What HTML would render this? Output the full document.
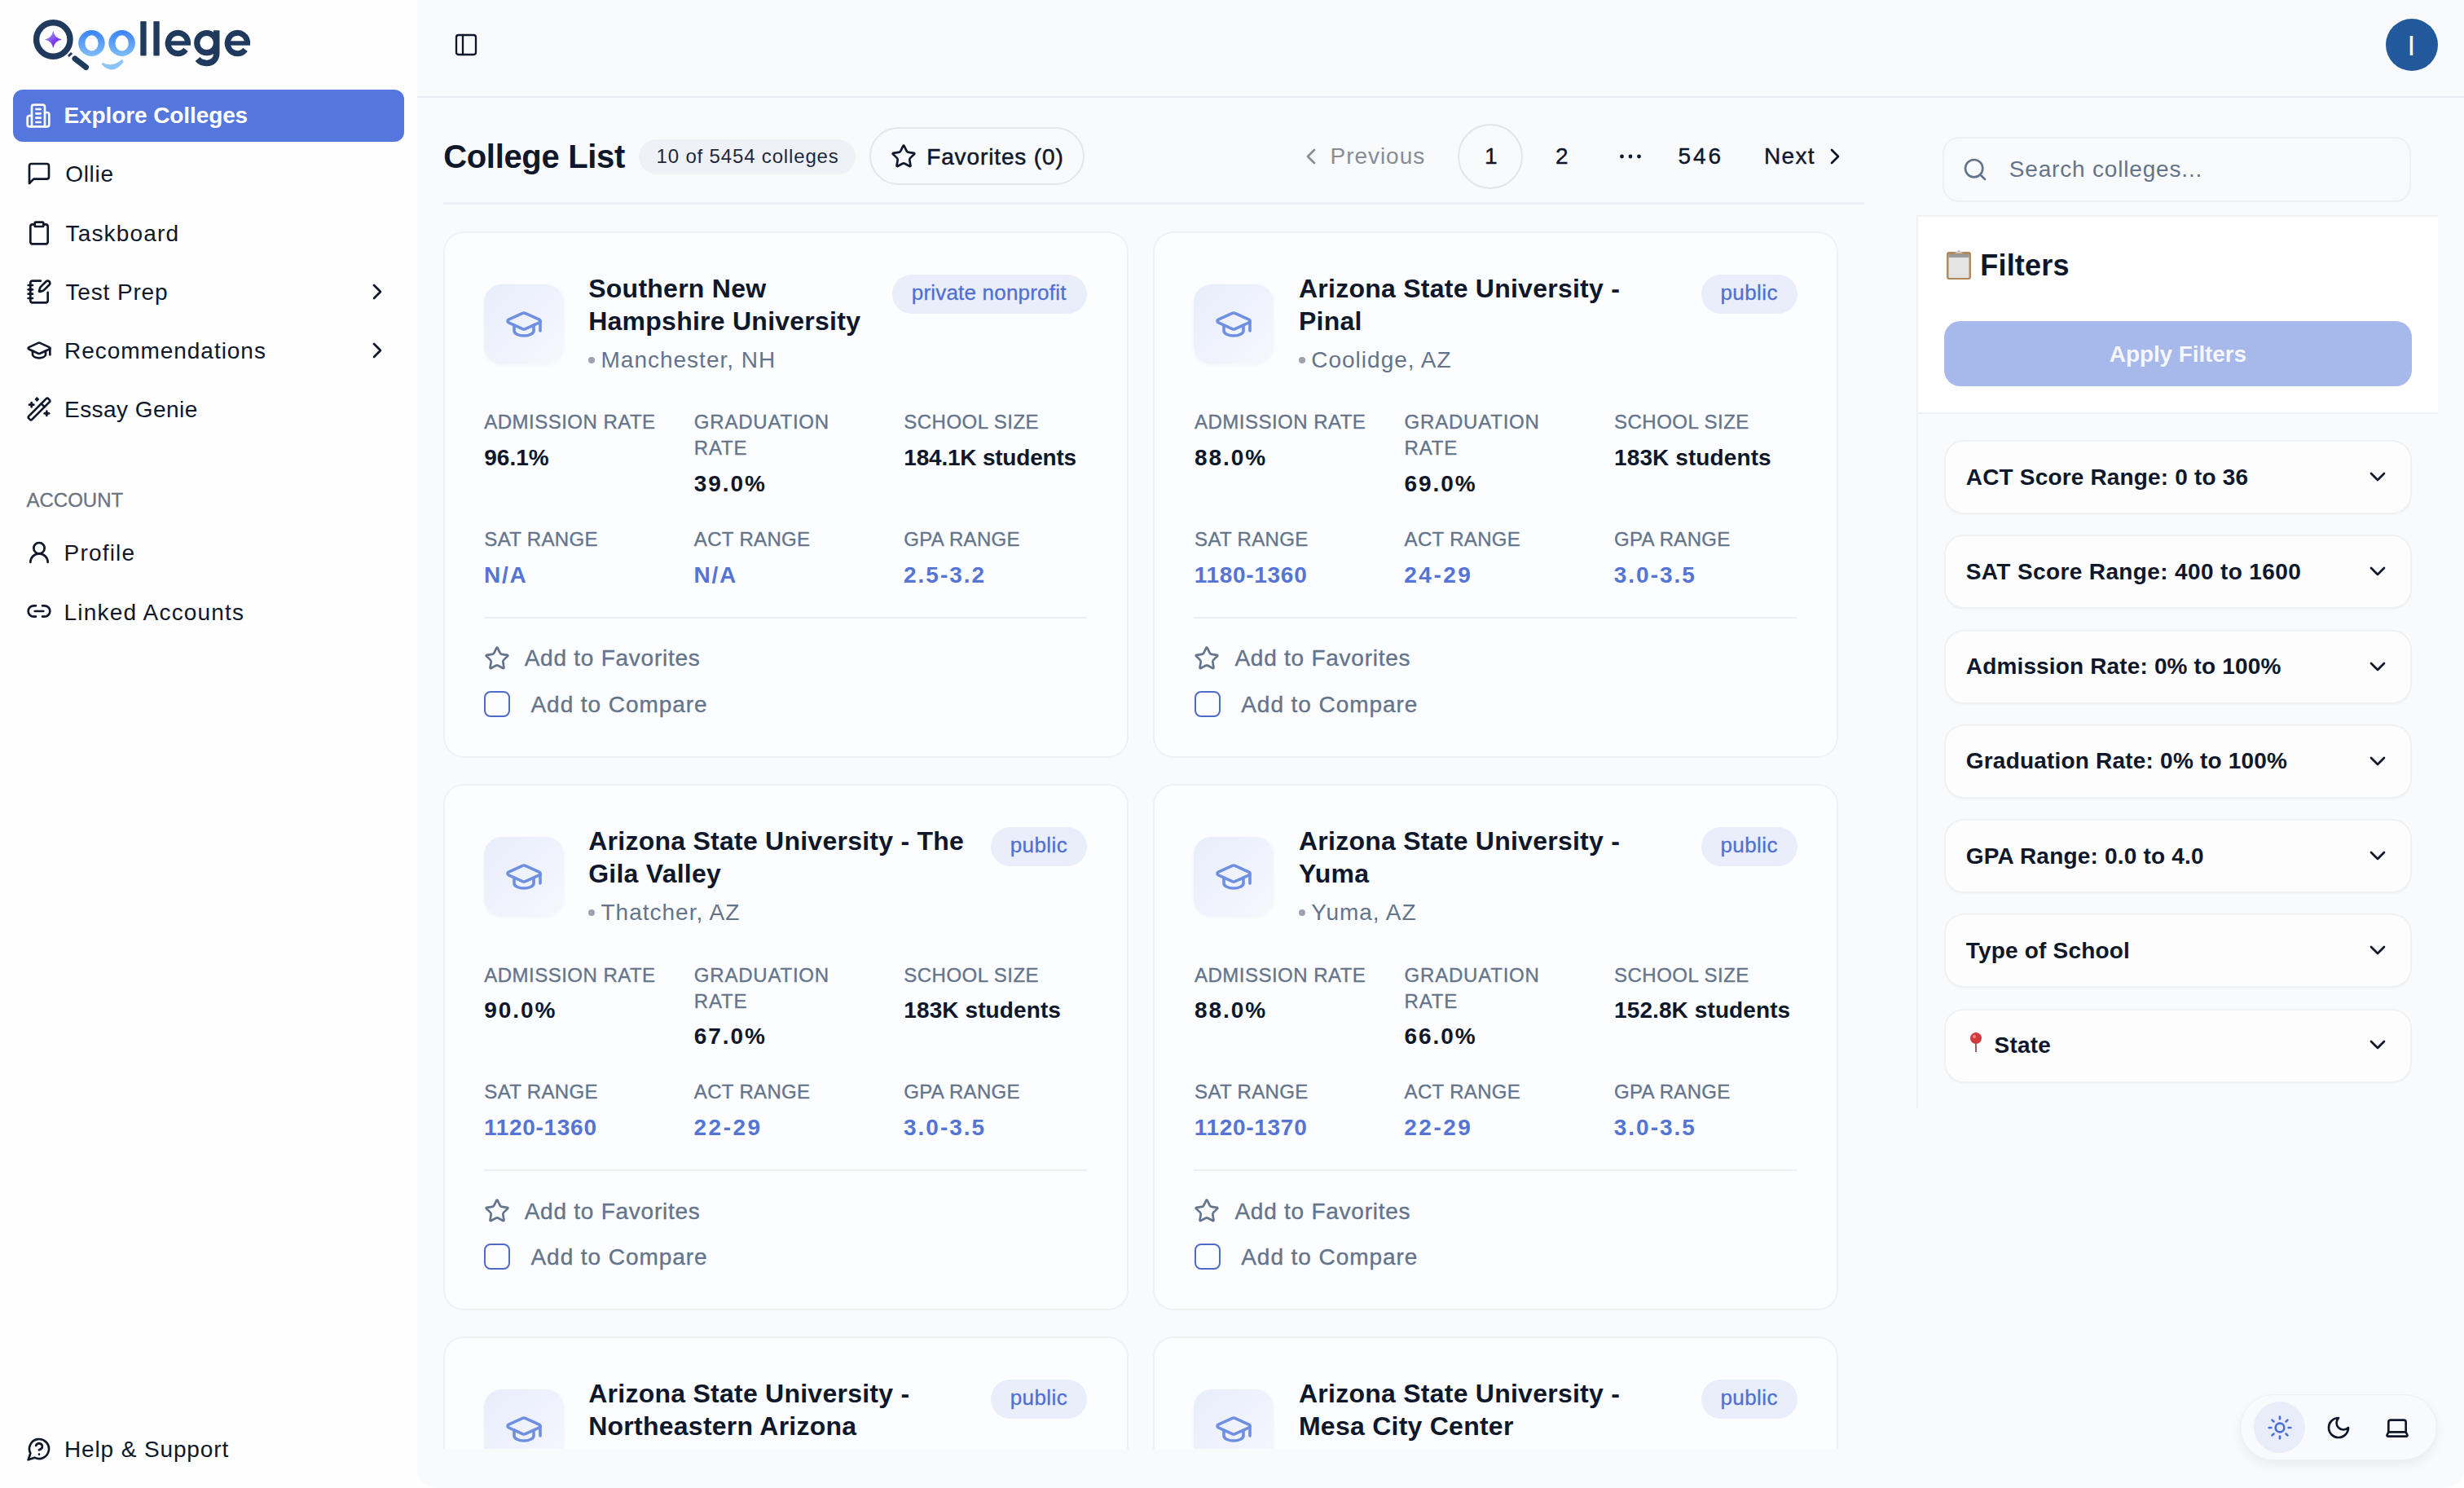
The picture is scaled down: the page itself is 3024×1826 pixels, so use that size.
<!DOCTYPE html><html><head><meta charset="utf-8"><style>
html,body{margin:0;padding:0}
body{width:3024px;height:1826px;overflow:hidden;position:relative;background:#fefefe;font-family:"Liberation Sans", sans-serif}
.t{position:absolute;white-space:nowrap;line-height:1}
.i{position:absolute;overflow:visible}
#sb{position:absolute;left:0;top:0;width:512px;height:1826px;background:#fefefe}
#clip{position:absolute;left:512px;top:0;width:1800px;height:1778px;overflow:hidden}
.card{position:absolute;width:839px;height:644px;box-sizing:border-box;box-shadow:0 0 0 1px #eef0f3, inset 0 0 0 1px #eef0f3;border-radius:24px;background:#fcfdfe}
.card .t{}
.ibox{position:absolute;left:49px;top:64px;width:98px;height:98px;border-radius:22px;background:linear-gradient(135deg,#e8edfb,#f6f8fd);box-shadow:0 1px 4px rgba(15,23,42,0.04)}
.badge{position:absolute;top:52px;height:48px;border-radius:24px;background:#e9eefa}
.acc{position:absolute;left:2386px;width:574px;height:91px;box-sizing:border-box;border:2px solid #eff1f3;border-radius:24px;background:#fdfdfe;box-shadow:0 1px 2px rgba(15,23,42,0.03)}
</style></head><body><div id="sb"></div>
<div style="position:absolute;left:512px;top:0;width:2512px;height:1826px;background:#f8fafc;border-radius:0 0 24px 24px"></div>
<svg class="i" style="left:30px;top:15px" width="300" height="81" viewBox="0 0 300 81">
<defs>
<linearGradient id="og" x1="0" y1="0" x2="0" y2="1"><stop offset="0" stop-color="#3b82f6"/><stop offset="1" stop-color="#7dbdf8"/></linearGradient>
<linearGradient id="sp" x1="0" y1="0" x2="1" y2="1"><stop offset="0" stop-color="#a5b4fc"/><stop offset="0.6" stop-color="#7c3aed"/></linearGradient>
</defs>
<circle cx="35.3" cy="33.5" r="20.7" fill="none" stroke="#1f3a5c" stroke-width="7.4"/>
<line x1="55" y1="51" x2="57" y2="53" stroke="#1f3a5c" stroke-width="6"/>
<line x1="62" y1="57" x2="75.5" y2="67.5" stroke="#1f3a5c" stroke-width="7" stroke-linecap="round"/>
<path d="M35.3 22.8 Q37 32 46 33.5 Q37 35 35.3 44.2 Q33.6 35 24.6 33.5 Q33.6 32 35.3 22.8Z" fill="url(#sp)"/>
<path fill="url(#og)" fill-rule="evenodd" d="M66.2 37.95a16.25 16 0 1 0 32.5 0a16.25 16 0 1 0 -32.5 0Z M74.3 37.95a8.15 9.6 0 1 0 16.3 0a8.15 9.6 0 1 0 -16.3 0Z"/>
<path fill="url(#og)" fill-rule="evenodd" d="M103.35 37.95a16.25 16 0 1 0 32.5 0a16.25 16 0 1 0 -32.5 0Z M111.45 37.95a8.15 9.6 0 1 0 16.3 0a8.15 9.6 0 1 0 -16.3 0Z"/>
<path d="M94.5 63.5 Q107.95 78.75 121.6 61 L120 57.8 Q108 68.1 96 62 Z" fill="#8cc4f7"/>
<rect x="142.3" y="11.1" width="7.3" height="42.3" fill="#1f3a5c"/>
<rect x="158.4" y="11.1" width="7.3" height="42.3" fill="#1f3a5c"/>
<path d="M200.60 38.00 A12.2 12.7 0 1 0 198.01 45.82" fill="none" stroke="#1f3a5c" stroke-width="7"/><path d="M175.90 38.00 H204.00" stroke="#1f3a5c" stroke-width="5.4"/>
<ellipse cx="223.6" cy="37.6" rx="11.9" ry="12.1" fill="none" stroke="#1f3a5c" stroke-width="7.2"/>
<path d="M235.75 22.3 V50 C235.75 58.5 230 62.4 223.6 62.4 C219 62.4 215 60.5 212.5 57.5" fill="none" stroke="#1f3a5c" stroke-width="7.5"/>
<path d="M273.65 38.00 A12.2 12.7 0 1 0 271.06 45.82" fill="none" stroke="#1f3a5c" stroke-width="7"/><path d="M248.95 38.00 H277.05" stroke="#1f3a5c" stroke-width="5.4"/>
</svg>
<div style="position:absolute;left:16px;top:110px;width:480px;height:64px;border-radius:12px;background:#5577dd"></div>
<svg class="i" style="left:31px;top:126px;" width="32" height="32" viewBox="0 0 24 24" fill="none" stroke="#ffffff" stroke-width="2" stroke-linecap="round" stroke-linejoin="round"><path d="M6 22V4a2 2 0 0 1 2-2h8a2 2 0 0 1 2 2v18Z"/><path d="M6 12H4a2 2 0 0 0-2 2v6a2 2 0 0 0 2 2h2"/><path d="M18 9h2a2 2 0 0 1 2 2v9a2 2 0 0 1-2 2h-2"/><path d="M10 6h4"/><path d="M10 10h4"/><path d="M10 14h4"/><path d="M10 18h4"/></svg>
<div class="t" style="left:78.50px;top:128.30px;font-size:28px;font-weight:700;color:#ffffff;letter-spacing:-0.1px;">Explore Colleges</div>
<svg class="i" style="left:32px;top:197px;" width="32" height="32" viewBox="0 0 24 24" fill="none" stroke="#0f172a" stroke-width="2" stroke-linecap="round" stroke-linejoin="round"><path d="M21 15a2 2 0 0 1-2 2H7l-4 4V5a2 2 0 0 1 2-2h14a2 2 0 0 1 2 2z"/></svg>
<div class="t" style="left:80.20px;top:200.30px;font-size:28px;font-weight:400;color:#0f172a;letter-spacing:0.7px;">Ollie</div>
<svg class="i" style="left:32px;top:270px;" width="32" height="32" viewBox="0 0 24 24" fill="none" stroke="#0f172a" stroke-width="2" stroke-linecap="round" stroke-linejoin="round"><rect width="8" height="4" x="8" y="2" rx="1" ry="1"/><path d="M16 4h2a2 2 0 0 1 2 2v14a2 2 0 0 1-2 2H6a2 2 0 0 1-2-2V6a2 2 0 0 1 2-2h2"/></svg>
<div class="t" style="left:80.50px;top:273.00px;font-size:28px;font-weight:400;color:#0f172a;letter-spacing:1.16px;">Taskboard</div>
<svg class="i" style="left:32px;top:342px;" width="32" height="32" viewBox="0 0 24 24" fill="none" stroke="#0f172a" stroke-width="2" stroke-linecap="round" stroke-linejoin="round"><path d="M13.4 2H6a2 2 0 0 0-2 2v16a2 2 0 0 0 2 2h12a2 2 0 0 0 2-2v-7.4"/><path d="M2 6h4"/><path d="M2 10h4"/><path d="M2 14h4"/><path d="M2 18h4"/><path d="M21.378 5.626a1 1 0 1 0-3.004-3.004l-5.01 5.012a2 2 0 0 0-.506.854l-.837 2.87a.5.5 0 0 0 .62.62l2.87-.837a2 2 0 0 0 .854-.506z"/></svg>
<div class="t" style="left:80.50px;top:345.00px;font-size:28px;font-weight:400;color:#0f172a;letter-spacing:0.85px;">Test Prep</div>
<svg class="i" style="left:32px;top:414px;" width="32" height="32" viewBox="0 0 24 24" fill="none" stroke="#0f172a" stroke-width="2" stroke-linecap="round" stroke-linejoin="round"><path d="M21.42 10.922a1 1 0 0 0-.019-1.838L12.83 5.18a2 2 0 0 0-1.66 0L2.6 9.08a1 1 0 0 0 0 1.832l8.57 3.908a2 2 0 0 0 1.66 0z"/><path d="M22 10v6"/><path d="M6 12.5V16a6 3 0 0 0 12 0v-3.5"/></svg>
<div class="t" style="left:79.00px;top:417.00px;font-size:28px;font-weight:400;color:#0f172a;letter-spacing:0.96px;">Recommendations</div>
<svg class="i" style="left:32px;top:486px;" width="32" height="32" viewBox="0 0 24 24" fill="none" stroke="#0f172a" stroke-width="2" stroke-linecap="round" stroke-linejoin="round"><path d="m21.64 3.64-1.28-1.28a1.21 1.21 0 0 0-1.72 0L2.36 18.64a1.21 1.21 0 0 0 0 1.72l1.28 1.28a1.2 1.2 0 0 0 1.72 0L21.64 5.36a1.2 1.2 0 0 0 0-1.72"/><path d="m14 7 3 3"/><path d="M5 6v4"/><path d="M19 14v4"/><path d="M10 2v2"/><path d="M7 8H3"/><path d="M21 16h-4"/><path d="M11 3H9"/></svg>
<div class="t" style="left:79.00px;top:489.00px;font-size:28px;font-weight:400;color:#0f172a;letter-spacing:0.45px;">Essay Genie</div>
<svg class="i" style="left:447px;top:342px;" width="32" height="32" viewBox="0 0 24 24" fill="none" stroke="#0f172a" stroke-width="2" stroke-linecap="round" stroke-linejoin="round"><path d="m9 18 6-6-6-6"/></svg>
<svg class="i" style="left:447px;top:414px;" width="32" height="32" viewBox="0 0 24 24" fill="none" stroke="#0f172a" stroke-width="2" stroke-linecap="round" stroke-linejoin="round"><path d="m9 18 6-6-6-6"/></svg>
<div class="t" style="left:32.50px;top:601.68px;font-size:24px;font-weight:400;color:#6b7280;letter-spacing:0.0px;-webkit-text-stroke:0.3px #6b7280;">ACCOUNT</div>
<svg class="i" style="left:32px;top:662px;" width="32" height="32" viewBox="0 0 24 24" fill="none" stroke="#0f172a" stroke-width="2" stroke-linecap="round" stroke-linejoin="round"><circle cx="12" cy="8" r="5"/><path d="M20 21a8 8 0 0 0-16 0"/></svg>
<div class="t" style="left:78.50px;top:665.00px;font-size:28px;font-weight:400;color:#0f172a;letter-spacing:1.2px;">Profile</div>
<svg class="i" style="left:32px;top:734px;" width="32" height="32" viewBox="0 0 24 24" fill="none" stroke="#0f172a" stroke-width="2" stroke-linecap="round" stroke-linejoin="round"><path d="M9 17H7A5 5 0 0 1 7 7h2"/><path d="M15 7h2a5 5 0 1 1 0 10h-2"/><line x1="8" x2="16" y1="12" y2="12"/></svg>
<div class="t" style="left:78.50px;top:737.50px;font-size:28px;font-weight:400;color:#0f172a;letter-spacing:1.19px;">Linked Accounts</div>
<svg class="i" style="left:32px;top:1762px;" width="32" height="32" viewBox="0 0 24 24" fill="none" stroke="#0f172a" stroke-width="2" stroke-linecap="round" stroke-linejoin="round"><path d="M7.9 20A9 9 0 1 0 4 16.1L2 22Z"/><path d="M9.09 9a3 3 0 0 1 5.83 1c0 2-3 3-3 3"/><path d="M12 17h.01"/></svg>
<div class="t" style="left:79.00px;top:1764.70px;font-size:28px;font-weight:400;color:#0f172a;letter-spacing:0.87px;">Help &amp; Support</div>
<div style="position:absolute;left:512px;top:118px;width:2512px;height:2px;background:#e8ebef"></div>
<svg class="i" style="left:556px;top:39px;" width="32" height="32" viewBox="0 0 24 24" fill="none" stroke="#0f172a" stroke-width="1.75" stroke-linecap="round" stroke-linejoin="round"><rect width="18" height="18" x="3" y="3" rx="2"/><path d="M9 3v18"/></svg>
<div style="position:absolute;left:2928px;top:23px;width:64px;height:64px;border-radius:50%;background:#22599c"></div>
<div class="t" style="left:2954.60px;top:38.37px;font-size:35px;font-weight:400;color:#ffffff;letter-spacing:0px;">I</div>
<div class="t" style="left:544.20px;top:172.39px;font-size:40px;font-weight:700;color:#0f172a;letter-spacing:-0.33px;">College List</div>
<div style="position:absolute;left:784px;top:171px;width:266px;height:43px;border-radius:22px;background:#eef1f5"></div>
<div class="t" style="left:805.50px;top:179.68px;font-size:24px;font-weight:400;color:#1e293b;letter-spacing:0.84px;">10 of 5454 colleges</div>
<div style="position:absolute;left:1067px;top:156px;width:264px;height:71px;box-sizing:border-box;border-radius:36px;border:2px solid #e3e6ea"></div>
<svg class="i" style="left:1093px;top:176px;" width="32" height="32" viewBox="0 0 24 24" fill="none" stroke="#0f172a" stroke-width="2" stroke-linecap="round" stroke-linejoin="round"><path d="M11.525 2.295a.53.53 0 0 1 .95 0l2.31 4.679a2.123 2.123 0 0 0 1.595 1.16l5.166.756a.53.53 0 0 1 .294.904l-3.736 3.638a2.123 2.123 0 0 0-.611 1.878l.882 5.14a.53.53 0 0 1-.771.56l-4.618-2.428a2.122 2.122 0 0 0-1.973 0L6.396 21.01a.53.53 0 0 1-.77-.56l.881-5.139a2.122 2.122 0 0 0-.611-1.879L2.16 9.795a.53.53 0 0 1 .294-.906l5.165-.755a2.122 2.122 0 0 0 1.597-1.16z"/></svg>
<div class="t" style="left:1137.20px;top:178.80px;font-size:28px;font-weight:400;color:#0f172a;letter-spacing:0.875px;-webkit-text-stroke:0.5px #0f172a;">Favorites (0)</div>
<svg class="i" style="left:1593px;top:176px;" width="32" height="32" viewBox="0 0 24 24" fill="none" stroke="#878c95" stroke-width="2" stroke-linecap="round" stroke-linejoin="round"><path d="m15 18-6-6 6-6"/></svg>
<div class="t" style="left:1632.50px;top:178.30px;font-size:28px;font-weight:400;color:#878c95;letter-spacing:0.96px;">Previous</div>
<div style="position:absolute;left:1789px;top:152px;width:80px;height:80px;box-sizing:border-box;border-radius:50%;border:2px solid #e2e5e9"></div>
<div class="t" style="left:1822.00px;top:178.30px;font-size:28px;font-weight:400;color:#0f172a;letter-spacing:0px;-webkit-text-stroke:0.4px #0f172a;">1</div>
<div class="t" style="left:1909.00px;top:178.30px;font-size:28px;font-weight:400;color:#0f172a;letter-spacing:0px;-webkit-text-stroke:0.4px #0f172a;">2</div>
<svg class="i" style="left:1985px;top:186px" width="32" height="12" viewBox="0 0 32 12"><circle cx="5.5" cy="6" r="2.4" fill="#0f172a"/><circle cx="16" cy="6" r="2.4" fill="#0f172a"/><circle cx="26.5" cy="6" r="2.4" fill="#0f172a"/></svg>
<div class="t" style="left:2059.60px;top:178.30px;font-size:28px;font-weight:400;color:#0f172a;letter-spacing:2.85px;-webkit-text-stroke:0.4px #0f172a;">546</div>
<div class="t" style="left:2164.90px;top:178.30px;font-size:28px;font-weight:400;color:#0f172a;letter-spacing:1.37px;-webkit-text-stroke:0.4px #0f172a;">Next</div>
<svg class="i" style="left:2236px;top:176px;" width="32" height="32" viewBox="0 0 24 24" fill="none" stroke="#0f172a" stroke-width="2" stroke-linecap="round" stroke-linejoin="round"><path d="m9 18 6-6-6-6"/></svg>
<div style="position:absolute;left:544px;top:248px;width:1744px;height:3px;background:#ecf0f4"></div>
<div id="clip">
<div class="card" style="left:32.50px;top:285.00px">
<div class="ibox"></div>
<svg class="i" style="left:25px;top:25px;left:74px;top:89px;" width="48" height="48" viewBox="0 0 24 24" fill="none" stroke="#6f90e2" stroke-width="1.8" stroke-linecap="round" stroke-linejoin="round"><path d="M21.42 10.922a1 1 0 0 0-.019-1.838L12.83 5.18a2 2 0 0 0-1.66 0L2.6 9.08a1 1 0 0 0 0 1.832l8.57 3.908a2 2 0 0 0 1.66 0z"/><path d="M22 10v6"/><path d="M6 12.5V16a6 3 0 0 0 12 0v-3.5"/></svg>
<div class="t" style="left:177.70px;top:52.91px;font-size:32px;font-weight:700;color:#0f172a;letter-spacing:0.25px;">Southern New</div>
<div class="t" style="left:177.70px;top:92.91px;font-size:32px;font-weight:700;color:#0f172a;letter-spacing:0.25px;">Hampshire University</div>
<div style="position:absolute;left:177.5px;top:153px;width:8px;height:8px;border-radius:50%;background:#9ca3af"></div>
<div class="t" style="left:193.00px;top:142.55px;font-size:28px;font-weight:400;color:#64748b;letter-spacing:1.0px;">Manchester, NH</div>
<div class="badge" style="left:550.25px;width:239px"></div>
<div class="t" style="left:574.25px;top:60.99px;font-size:26px;font-weight:400;color:#5070d3;letter-spacing:0.2px;-webkit-text-stroke:0.3px #5070d3;">private nonprofit</div>
<div class="t" style="left:49.80px;top:221.43px;font-size:24px;font-weight:400;color:#64748b;letter-spacing:0.48px;-webkit-text-stroke:0.35px #64748b;">ADMISSION RATE</div>
<div class="t" style="left:307.30px;top:221.43px;font-size:24px;font-weight:400;color:#64748b;letter-spacing:0.79px;-webkit-text-stroke:0.35px #64748b;">GRADUATION</div>
<div class="t" style="left:564.80px;top:221.43px;font-size:24px;font-weight:400;color:#64748b;letter-spacing:0.48px;-webkit-text-stroke:0.35px #64748b;">SCHOOL SIZE</div>
<div class="t" style="left:307.30px;top:253.43px;font-size:24px;font-weight:400;color:#64748b;letter-spacing:0.79px;-webkit-text-stroke:0.35px #64748b;">RATE</div>
<div class="t" style="left:49.80px;top:263.05px;font-size:28px;font-weight:700;color:#0f172a;letter-spacing:0.0px;">96.1%</div>
<div class="t" style="left:307.30px;top:295.05px;font-size:28px;font-weight:700;color:#0f172a;letter-spacing:1.9px;">39.0%</div>
<div class="t" style="left:564.80px;top:263.05px;font-size:28px;font-weight:700;color:#0f172a;letter-spacing:-0.21px;">184.1K students</div>
<div class="t" style="left:49.80px;top:365.18px;font-size:24px;font-weight:400;color:#64748b;letter-spacing:0.34px;-webkit-text-stroke:0.35px #64748b;">SAT RANGE</div>
<div class="t" style="left:49.50px;top:406.80px;font-size:28px;font-weight:700;color:#5474d6;letter-spacing:1.8px;">N/A</div>
<div class="t" style="left:307.30px;top:365.18px;font-size:24px;font-weight:400;color:#64748b;letter-spacing:0.34px;-webkit-text-stroke:0.35px #64748b;">ACT RANGE</div>
<div class="t" style="left:307.00px;top:406.80px;font-size:28px;font-weight:700;color:#5474d6;letter-spacing:1.8px;">N/A</div>
<div class="t" style="left:564.80px;top:365.18px;font-size:24px;font-weight:400;color:#64748b;letter-spacing:0.34px;-webkit-text-stroke:0.35px #64748b;">GPA RANGE</div>
<div class="t" style="left:564.50px;top:406.80px;font-size:28px;font-weight:700;color:#5474d6;letter-spacing:2.0px;">2.5-3.2</div>
<div style="position:absolute;left:49px;top:472px;width:740px;height:2px;background:#edf0f3"></div>
<svg class="i" style="left:49px;top:507px;" width="32" height="32" viewBox="0 0 24 24" fill="none" stroke="#64748b" stroke-width="2" stroke-linecap="round" stroke-linejoin="round"><path d="M11.525 2.295a.53.53 0 0 1 .95 0l2.31 4.679a2.123 2.123 0 0 0 1.595 1.16l5.166.756a.53.53 0 0 1 .294.904l-3.736 3.638a2.123 2.123 0 0 0-.611 1.878l.882 5.14a.53.53 0 0 1-.771.56l-4.618-2.428a2.122 2.122 0 0 0-1.973 0L6.396 21.01a.53.53 0 0 1-.77-.56l.881-5.139a2.122 2.122 0 0 0-.611-1.879L2.16 9.795a.53.53 0 0 1 .294-.906l5.165-.755a2.122 2.122 0 0 0 1.597-1.16z"/></svg>
<div class="t" style="left:99.20px;top:509.30px;font-size:28px;font-weight:400;color:#64748b;letter-spacing:0.75px;-webkit-text-stroke:0.35px #64748b;">Add to Favorites</div>
<div style="position:absolute;left:49.5px;top:563px;width:32px;height:32px;box-sizing:border-box;border-radius:8px;border:2px solid #4f6bc7"></div>
<div class="t" style="left:107.00px;top:565.80px;font-size:28px;font-weight:400;color:#64748b;letter-spacing:0.94px;-webkit-text-stroke:0.35px #64748b;">Add to Compare</div>
</div>
<div class="card" style="left:904.25px;top:285.00px">
<div class="ibox"></div>
<svg class="i" style="left:25px;top:25px;left:74px;top:89px;" width="48" height="48" viewBox="0 0 24 24" fill="none" stroke="#6f90e2" stroke-width="1.8" stroke-linecap="round" stroke-linejoin="round"><path d="M21.42 10.922a1 1 0 0 0-.019-1.838L12.83 5.18a2 2 0 0 0-1.66 0L2.6 9.08a1 1 0 0 0 0 1.832l8.57 3.908a2 2 0 0 0 1.66 0z"/><path d="M22 10v6"/><path d="M6 12.5V16a6 3 0 0 0 12 0v-3.5"/></svg>
<div class="t" style="left:177.70px;top:52.91px;font-size:32px;font-weight:700;color:#0f172a;letter-spacing:0.25px;">Arizona State University -</div>
<div class="t" style="left:177.70px;top:92.91px;font-size:32px;font-weight:700;color:#0f172a;letter-spacing:0.25px;">Pinal</div>
<div style="position:absolute;left:177.5px;top:153px;width:8px;height:8px;border-radius:50%;background:#9ca3af"></div>
<div class="t" style="left:193.00px;top:142.55px;font-size:28px;font-weight:400;color:#64748b;letter-spacing:1.0px;">Coolidge, AZ</div>
<div class="badge" style="left:671.25px;width:118px"></div>
<div class="t" style="left:695.25px;top:60.99px;font-size:26px;font-weight:400;color:#5070d3;letter-spacing:0.4px;-webkit-text-stroke:0.3px #5070d3;">public</div>
<div class="t" style="left:49.80px;top:221.43px;font-size:24px;font-weight:400;color:#64748b;letter-spacing:0.48px;-webkit-text-stroke:0.35px #64748b;">ADMISSION RATE</div>
<div class="t" style="left:307.30px;top:221.43px;font-size:24px;font-weight:400;color:#64748b;letter-spacing:0.79px;-webkit-text-stroke:0.35px #64748b;">GRADUATION</div>
<div class="t" style="left:564.80px;top:221.43px;font-size:24px;font-weight:400;color:#64748b;letter-spacing:0.48px;-webkit-text-stroke:0.35px #64748b;">SCHOOL SIZE</div>
<div class="t" style="left:307.30px;top:253.43px;font-size:24px;font-weight:400;color:#64748b;letter-spacing:0.79px;-webkit-text-stroke:0.35px #64748b;">RATE</div>
<div class="t" style="left:49.80px;top:263.05px;font-size:28px;font-weight:700;color:#0f172a;letter-spacing:1.9px;">88.0%</div>
<div class="t" style="left:307.30px;top:295.05px;font-size:28px;font-weight:700;color:#0f172a;letter-spacing:1.9px;">69.0%</div>
<div class="t" style="left:564.80px;top:263.05px;font-size:28px;font-weight:700;color:#0f172a;letter-spacing:0.1px;">183K students</div>
<div class="t" style="left:49.80px;top:365.18px;font-size:24px;font-weight:400;color:#64748b;letter-spacing:0.34px;-webkit-text-stroke:0.35px #64748b;">SAT RANGE</div>
<div class="t" style="left:49.50px;top:406.80px;font-size:28px;font-weight:700;color:#5474d6;letter-spacing:0.7px;">1180-1360</div>
<div class="t" style="left:307.30px;top:365.18px;font-size:24px;font-weight:400;color:#64748b;letter-spacing:0.34px;-webkit-text-stroke:0.35px #64748b;">ACT RANGE</div>
<div class="t" style="left:307.00px;top:406.80px;font-size:28px;font-weight:700;color:#5474d6;letter-spacing:2.5px;">24-29</div>
<div class="t" style="left:564.80px;top:365.18px;font-size:24px;font-weight:400;color:#64748b;letter-spacing:0.34px;-webkit-text-stroke:0.35px #64748b;">GPA RANGE</div>
<div class="t" style="left:564.50px;top:406.80px;font-size:28px;font-weight:700;color:#5474d6;letter-spacing:2.0px;">3.0-3.5</div>
<div style="position:absolute;left:49px;top:472px;width:740px;height:2px;background:#edf0f3"></div>
<svg class="i" style="left:49px;top:507px;" width="32" height="32" viewBox="0 0 24 24" fill="none" stroke="#64748b" stroke-width="2" stroke-linecap="round" stroke-linejoin="round"><path d="M11.525 2.295a.53.53 0 0 1 .95 0l2.31 4.679a2.123 2.123 0 0 0 1.595 1.16l5.166.756a.53.53 0 0 1 .294.904l-3.736 3.638a2.123 2.123 0 0 0-.611 1.878l.882 5.14a.53.53 0 0 1-.771.56l-4.618-2.428a2.122 2.122 0 0 0-1.973 0L6.396 21.01a.53.53 0 0 1-.77-.56l.881-5.139a2.122 2.122 0 0 0-.611-1.879L2.16 9.795a.53.53 0 0 1 .294-.906l5.165-.755a2.122 2.122 0 0 0 1.597-1.16z"/></svg>
<div class="t" style="left:99.20px;top:509.30px;font-size:28px;font-weight:400;color:#64748b;letter-spacing:0.75px;-webkit-text-stroke:0.35px #64748b;">Add to Favorites</div>
<div style="position:absolute;left:49.5px;top:563px;width:32px;height:32px;box-sizing:border-box;border-radius:8px;border:2px solid #4f6bc7"></div>
<div class="t" style="left:107.00px;top:565.80px;font-size:28px;font-weight:400;color:#64748b;letter-spacing:0.94px;-webkit-text-stroke:0.35px #64748b;">Add to Compare</div>
</div>
<div class="card" style="left:32.50px;top:963.25px">
<div class="ibox"></div>
<svg class="i" style="left:25px;top:25px;left:74px;top:89px;" width="48" height="48" viewBox="0 0 24 24" fill="none" stroke="#6f90e2" stroke-width="1.8" stroke-linecap="round" stroke-linejoin="round"><path d="M21.42 10.922a1 1 0 0 0-.019-1.838L12.83 5.18a2 2 0 0 0-1.66 0L2.6 9.08a1 1 0 0 0 0 1.832l8.57 3.908a2 2 0 0 0 1.66 0z"/><path d="M22 10v6"/><path d="M6 12.5V16a6 3 0 0 0 12 0v-3.5"/></svg>
<div class="t" style="left:177.70px;top:52.91px;font-size:32px;font-weight:700;color:#0f172a;letter-spacing:0.25px;">Arizona State University - The</div>
<div class="t" style="left:177.70px;top:92.91px;font-size:32px;font-weight:700;color:#0f172a;letter-spacing:0.25px;">Gila Valley</div>
<div style="position:absolute;left:177.5px;top:153px;width:8px;height:8px;border-radius:50%;background:#9ca3af"></div>
<div class="t" style="left:193.00px;top:142.55px;font-size:28px;font-weight:400;color:#64748b;letter-spacing:1.0px;">Thatcher, AZ</div>
<div class="badge" style="left:671.25px;width:118px"></div>
<div class="t" style="left:695.25px;top:60.99px;font-size:26px;font-weight:400;color:#5070d3;letter-spacing:0.4px;-webkit-text-stroke:0.3px #5070d3;">public</div>
<div class="t" style="left:49.80px;top:221.43px;font-size:24px;font-weight:400;color:#64748b;letter-spacing:0.48px;-webkit-text-stroke:0.35px #64748b;">ADMISSION RATE</div>
<div class="t" style="left:307.30px;top:221.43px;font-size:24px;font-weight:400;color:#64748b;letter-spacing:0.79px;-webkit-text-stroke:0.35px #64748b;">GRADUATION</div>
<div class="t" style="left:564.80px;top:221.43px;font-size:24px;font-weight:400;color:#64748b;letter-spacing:0.48px;-webkit-text-stroke:0.35px #64748b;">SCHOOL SIZE</div>
<div class="t" style="left:307.30px;top:253.43px;font-size:24px;font-weight:400;color:#64748b;letter-spacing:0.79px;-webkit-text-stroke:0.35px #64748b;">RATE</div>
<div class="t" style="left:49.80px;top:263.05px;font-size:28px;font-weight:700;color:#0f172a;letter-spacing:1.9px;">90.0%</div>
<div class="t" style="left:307.30px;top:295.05px;font-size:28px;font-weight:700;color:#0f172a;letter-spacing:1.9px;">67.0%</div>
<div class="t" style="left:564.80px;top:263.05px;font-size:28px;font-weight:700;color:#0f172a;letter-spacing:0.1px;">183K students</div>
<div class="t" style="left:49.80px;top:365.18px;font-size:24px;font-weight:400;color:#64748b;letter-spacing:0.34px;-webkit-text-stroke:0.35px #64748b;">SAT RANGE</div>
<div class="t" style="left:49.50px;top:406.80px;font-size:28px;font-weight:700;color:#5474d6;letter-spacing:0.7px;">1120-1360</div>
<div class="t" style="left:307.30px;top:365.18px;font-size:24px;font-weight:400;color:#64748b;letter-spacing:0.34px;-webkit-text-stroke:0.35px #64748b;">ACT RANGE</div>
<div class="t" style="left:307.00px;top:406.80px;font-size:28px;font-weight:700;color:#5474d6;letter-spacing:2.5px;">22-29</div>
<div class="t" style="left:564.80px;top:365.18px;font-size:24px;font-weight:400;color:#64748b;letter-spacing:0.34px;-webkit-text-stroke:0.35px #64748b;">GPA RANGE</div>
<div class="t" style="left:564.50px;top:406.80px;font-size:28px;font-weight:700;color:#5474d6;letter-spacing:2.0px;">3.0-3.5</div>
<div style="position:absolute;left:49px;top:472px;width:740px;height:2px;background:#edf0f3"></div>
<svg class="i" style="left:49px;top:507px;" width="32" height="32" viewBox="0 0 24 24" fill="none" stroke="#64748b" stroke-width="2" stroke-linecap="round" stroke-linejoin="round"><path d="M11.525 2.295a.53.53 0 0 1 .95 0l2.31 4.679a2.123 2.123 0 0 0 1.595 1.16l5.166.756a.53.53 0 0 1 .294.904l-3.736 3.638a2.123 2.123 0 0 0-.611 1.878l.882 5.14a.53.53 0 0 1-.771.56l-4.618-2.428a2.122 2.122 0 0 0-1.973 0L6.396 21.01a.53.53 0 0 1-.77-.56l.881-5.139a2.122 2.122 0 0 0-.611-1.879L2.16 9.795a.53.53 0 0 1 .294-.906l5.165-.755a2.122 2.122 0 0 0 1.597-1.16z"/></svg>
<div class="t" style="left:99.20px;top:509.30px;font-size:28px;font-weight:400;color:#64748b;letter-spacing:0.75px;-webkit-text-stroke:0.35px #64748b;">Add to Favorites</div>
<div style="position:absolute;left:49.5px;top:563px;width:32px;height:32px;box-sizing:border-box;border-radius:8px;border:2px solid #4f6bc7"></div>
<div class="t" style="left:107.00px;top:565.80px;font-size:28px;font-weight:400;color:#64748b;letter-spacing:0.94px;-webkit-text-stroke:0.35px #64748b;">Add to Compare</div>
</div>
<div class="card" style="left:904.25px;top:963.25px">
<div class="ibox"></div>
<svg class="i" style="left:25px;top:25px;left:74px;top:89px;" width="48" height="48" viewBox="0 0 24 24" fill="none" stroke="#6f90e2" stroke-width="1.8" stroke-linecap="round" stroke-linejoin="round"><path d="M21.42 10.922a1 1 0 0 0-.019-1.838L12.83 5.18a2 2 0 0 0-1.66 0L2.6 9.08a1 1 0 0 0 0 1.832l8.57 3.908a2 2 0 0 0 1.66 0z"/><path d="M22 10v6"/><path d="M6 12.5V16a6 3 0 0 0 12 0v-3.5"/></svg>
<div class="t" style="left:177.70px;top:52.91px;font-size:32px;font-weight:700;color:#0f172a;letter-spacing:0.25px;">Arizona State University -</div>
<div class="t" style="left:177.70px;top:92.91px;font-size:32px;font-weight:700;color:#0f172a;letter-spacing:0.25px;">Yuma</div>
<div style="position:absolute;left:177.5px;top:153px;width:8px;height:8px;border-radius:50%;background:#9ca3af"></div>
<div class="t" style="left:193.00px;top:142.55px;font-size:28px;font-weight:400;color:#64748b;letter-spacing:1.0px;">Yuma, AZ</div>
<div class="badge" style="left:671.25px;width:118px"></div>
<div class="t" style="left:695.25px;top:60.99px;font-size:26px;font-weight:400;color:#5070d3;letter-spacing:0.4px;-webkit-text-stroke:0.3px #5070d3;">public</div>
<div class="t" style="left:49.80px;top:221.43px;font-size:24px;font-weight:400;color:#64748b;letter-spacing:0.48px;-webkit-text-stroke:0.35px #64748b;">ADMISSION RATE</div>
<div class="t" style="left:307.30px;top:221.43px;font-size:24px;font-weight:400;color:#64748b;letter-spacing:0.79px;-webkit-text-stroke:0.35px #64748b;">GRADUATION</div>
<div class="t" style="left:564.80px;top:221.43px;font-size:24px;font-weight:400;color:#64748b;letter-spacing:0.48px;-webkit-text-stroke:0.35px #64748b;">SCHOOL SIZE</div>
<div class="t" style="left:307.30px;top:253.43px;font-size:24px;font-weight:400;color:#64748b;letter-spacing:0.79px;-webkit-text-stroke:0.35px #64748b;">RATE</div>
<div class="t" style="left:49.80px;top:263.05px;font-size:28px;font-weight:700;color:#0f172a;letter-spacing:1.9px;">88.0%</div>
<div class="t" style="left:307.30px;top:295.05px;font-size:28px;font-weight:700;color:#0f172a;letter-spacing:1.9px;">66.0%</div>
<div class="t" style="left:564.80px;top:263.05px;font-size:28px;font-weight:700;color:#0f172a;letter-spacing:0.1px;">152.8K students</div>
<div class="t" style="left:49.80px;top:365.18px;font-size:24px;font-weight:400;color:#64748b;letter-spacing:0.34px;-webkit-text-stroke:0.35px #64748b;">SAT RANGE</div>
<div class="t" style="left:49.50px;top:406.80px;font-size:28px;font-weight:700;color:#5474d6;letter-spacing:0.7px;">1120-1370</div>
<div class="t" style="left:307.30px;top:365.18px;font-size:24px;font-weight:400;color:#64748b;letter-spacing:0.34px;-webkit-text-stroke:0.35px #64748b;">ACT RANGE</div>
<div class="t" style="left:307.00px;top:406.80px;font-size:28px;font-weight:700;color:#5474d6;letter-spacing:2.5px;">22-29</div>
<div class="t" style="left:564.80px;top:365.18px;font-size:24px;font-weight:400;color:#64748b;letter-spacing:0.34px;-webkit-text-stroke:0.35px #64748b;">GPA RANGE</div>
<div class="t" style="left:564.50px;top:406.80px;font-size:28px;font-weight:700;color:#5474d6;letter-spacing:2.0px;">3.0-3.5</div>
<div style="position:absolute;left:49px;top:472px;width:740px;height:2px;background:#edf0f3"></div>
<svg class="i" style="left:49px;top:507px;" width="32" height="32" viewBox="0 0 24 24" fill="none" stroke="#64748b" stroke-width="2" stroke-linecap="round" stroke-linejoin="round"><path d="M11.525 2.295a.53.53 0 0 1 .95 0l2.31 4.679a2.123 2.123 0 0 0 1.595 1.16l5.166.756a.53.53 0 0 1 .294.904l-3.736 3.638a2.123 2.123 0 0 0-.611 1.878l.882 5.14a.53.53 0 0 1-.771.56l-4.618-2.428a2.122 2.122 0 0 0-1.973 0L6.396 21.01a.53.53 0 0 1-.77-.56l.881-5.139a2.122 2.122 0 0 0-.611-1.879L2.16 9.795a.53.53 0 0 1 .294-.906l5.165-.755a2.122 2.122 0 0 0 1.597-1.16z"/></svg>
<div class="t" style="left:99.20px;top:509.30px;font-size:28px;font-weight:400;color:#64748b;letter-spacing:0.75px;-webkit-text-stroke:0.35px #64748b;">Add to Favorites</div>
<div style="position:absolute;left:49.5px;top:563px;width:32px;height:32px;box-sizing:border-box;border-radius:8px;border:2px solid #4f6bc7"></div>
<div class="t" style="left:107.00px;top:565.80px;font-size:28px;font-weight:400;color:#64748b;letter-spacing:0.94px;-webkit-text-stroke:0.35px #64748b;">Add to Compare</div>
</div>
<div class="card" style="left:32.50px;top:1641.25px">
<div class="ibox"></div>
<svg class="i" style="left:25px;top:25px;left:74px;top:89px;" width="48" height="48" viewBox="0 0 24 24" fill="none" stroke="#6f90e2" stroke-width="1.8" stroke-linecap="round" stroke-linejoin="round"><path d="M21.42 10.922a1 1 0 0 0-.019-1.838L12.83 5.18a2 2 0 0 0-1.66 0L2.6 9.08a1 1 0 0 0 0 1.832l8.57 3.908a2 2 0 0 0 1.66 0z"/><path d="M22 10v6"/><path d="M6 12.5V16a6 3 0 0 0 12 0v-3.5"/></svg>
<div class="t" style="left:177.70px;top:52.91px;font-size:32px;font-weight:700;color:#0f172a;letter-spacing:0.25px;">Arizona State University -</div>
<div class="t" style="left:177.70px;top:92.91px;font-size:32px;font-weight:700;color:#0f172a;letter-spacing:0.25px;">Northeastern Arizona</div>
<div class="badge" style="left:671.25px;width:118px"></div>
<div class="t" style="left:695.25px;top:60.99px;font-size:26px;font-weight:400;color:#5070d3;letter-spacing:0.4px;-webkit-text-stroke:0.3px #5070d3;">public</div>
</div>
<div class="card" style="left:904.25px;top:1641.25px">
<div class="ibox"></div>
<svg class="i" style="left:25px;top:25px;left:74px;top:89px;" width="48" height="48" viewBox="0 0 24 24" fill="none" stroke="#6f90e2" stroke-width="1.8" stroke-linecap="round" stroke-linejoin="round"><path d="M21.42 10.922a1 1 0 0 0-.019-1.838L12.83 5.18a2 2 0 0 0-1.66 0L2.6 9.08a1 1 0 0 0 0 1.832l8.57 3.908a2 2 0 0 0 1.66 0z"/><path d="M22 10v6"/><path d="M6 12.5V16a6 3 0 0 0 12 0v-3.5"/></svg>
<div class="t" style="left:177.70px;top:52.91px;font-size:32px;font-weight:700;color:#0f172a;letter-spacing:0.25px;">Arizona State University -</div>
<div class="t" style="left:177.70px;top:92.91px;font-size:32px;font-weight:700;color:#0f172a;letter-spacing:0.25px;">Mesa City Center</div>
<div class="badge" style="left:671.25px;width:118px"></div>
<div class="t" style="left:695.25px;top:60.99px;font-size:26px;font-weight:400;color:#5070d3;letter-spacing:0.4px;-webkit-text-stroke:0.3px #5070d3;">public</div>
</div>
</div>
<div style="position:absolute;left:2384px;top:168px;width:575px;height:80px;box-sizing:border-box;border-radius:20px;border:2px solid #eef0f3;background:#f8fafc"></div>
<svg class="i" style="left:2408px;top:192px;" width="32" height="32" viewBox="0 0 24 24" fill="none" stroke="#64748b" stroke-width="2" stroke-linecap="round" stroke-linejoin="round"><circle cx="11" cy="11" r="8"/><path d="m21 21-4.3-4.3"/></svg>
<div class="t" style="left:2465.80px;top:194.30px;font-size:28px;font-weight:400;color:#64748b;letter-spacing:0.82px;">Search colleges...</div>
<div style="position:absolute;left:2352px;top:264px;width:640px;height:1096px;box-sizing:border-box;border-left:2px solid #eff1f3;border-top:2px solid #eff1f3;background:#f9fafb"></div>
<div style="position:absolute;left:2354px;top:266px;width:638px;height:240px;background:#ffffff;border-bottom:2px solid #eef0f2"></div>
<svg class="i" style="left:2386px;top:305px" width="36" height="40" viewBox="0 0 36 40">
<rect x="3" y="4" width="30" height="34" rx="3" fill="#b08a5a"/>
<rect x="5.5" y="7" width="25" height="29" rx="1.5" fill="#e4e4e4"/>
<rect x="5.5" y="7" width="25" height="4" fill="#9a9a9a"/>
<path d="M13 6 L18 1.5 L23 6Z" fill="#c9c9c9"/>
</svg>
<div class="t" style="left:2430.20px;top:308.28px;font-size:36px;font-weight:700;color:#0f172a;letter-spacing:0.23px;">Filters</div>
<div style="position:absolute;left:2386px;top:394px;width:574px;height:80px;border-radius:20px;background:#a7b8ea"></div>
<div class="t" style="left:2588.80px;top:420.55px;font-size:28px;font-weight:700;color:#f5f7fd;letter-spacing:-0.1px;">Apply Filters</div>
<div class="acc" style="top:540.00px"></div>
<div class="t" style="left:2412.80px;top:571.55px;font-size:28px;font-weight:700;color:#0f172a;letter-spacing:0.17px;">ACT Score Range: 0 to 36</div>
<svg class="i" style="left:2902px;top:569px;" width="32" height="32" viewBox="0 0 24 24" fill="none" stroke="#0f172a" stroke-width="2" stroke-linecap="round" stroke-linejoin="round"><path d="m6 9 6 6 6-6"/></svg>
<div class="acc" style="top:656.25px"></div>
<div class="t" style="left:2412.80px;top:687.80px;font-size:28px;font-weight:700;color:#0f172a;letter-spacing:0.37px;">SAT Score Range: 400 to 1600</div>
<svg class="i" style="left:2902px;top:685px;" width="32" height="32" viewBox="0 0 24 24" fill="none" stroke="#0f172a" stroke-width="2" stroke-linecap="round" stroke-linejoin="round"><path d="m6 9 6 6 6-6"/></svg>
<div class="acc" style="top:772.50px"></div>
<div class="t" style="left:2412.80px;top:804.05px;font-size:28px;font-weight:700;color:#0f172a;letter-spacing:0.15px;">Admission Rate: 0% to 100%</div>
<svg class="i" style="left:2902px;top:802px;" width="32" height="32" viewBox="0 0 24 24" fill="none" stroke="#0f172a" stroke-width="2" stroke-linecap="round" stroke-linejoin="round"><path d="m6 9 6 6 6-6"/></svg>
<div class="acc" style="top:888.75px"></div>
<div class="t" style="left:2412.80px;top:920.30px;font-size:28px;font-weight:700;color:#0f172a;letter-spacing:0.2px;">Graduation Rate: 0% to 100%</div>
<svg class="i" style="left:2902px;top:918px;" width="32" height="32" viewBox="0 0 24 24" fill="none" stroke="#0f172a" stroke-width="2" stroke-linecap="round" stroke-linejoin="round"><path d="m6 9 6 6 6-6"/></svg>
<div class="acc" style="top:1005.00px"></div>
<div class="t" style="left:2412.80px;top:1036.55px;font-size:28px;font-weight:700;color:#0f172a;letter-spacing:0.2px;">GPA Range: 0.0 to 4.0</div>
<svg class="i" style="left:2902px;top:1034px;" width="32" height="32" viewBox="0 0 24 24" fill="none" stroke="#0f172a" stroke-width="2" stroke-linecap="round" stroke-linejoin="round"><path d="m6 9 6 6 6-6"/></svg>
<div class="acc" style="top:1121.25px"></div>
<div class="t" style="left:2412.80px;top:1152.80px;font-size:28px;font-weight:700;color:#0f172a;letter-spacing:0.19px;">Type of School</div>
<svg class="i" style="left:2902px;top:1150px;" width="32" height="32" viewBox="0 0 24 24" fill="none" stroke="#0f172a" stroke-width="2" stroke-linecap="round" stroke-linejoin="round"><path d="m6 9 6 6 6-6"/></svg>
<div class="acc" style="top:1237.50px"></div>
<svg class="i" style="left:2416px;top:1266px" width="18" height="26" viewBox="0 0 18 26"><circle cx="9" cy="8" r="7" fill="#d23b3b"/><circle cx="7" cy="6" r="2" fill="#f08a8a"/><rect x="8" y="14" width="2" height="11" fill="#8a6a5a"/></svg>
<div class="t" style="left:2447.50px;top:1269.05px;font-size:28px;font-weight:700;color:#0f172a;letter-spacing:0.2px;">State</div>
<svg class="i" style="left:2902px;top:1266px;" width="32" height="32" viewBox="0 0 24 24" fill="none" stroke="#0f172a" stroke-width="2" stroke-linecap="round" stroke-linejoin="round"><path d="m6 9 6 6 6-6"/></svg>
<div style="position:absolute;left:2749px;top:1711px;width:242px;height:81px;border-radius:41px;background:#f8fafc;border:1.5px solid #edf0f3;box-sizing:border-box;box-shadow:0 6px 14px rgba(15,23,42,0.06)"></div>
<div style="position:absolute;left:2766px;top:1720px;width:63px;height:63px;border-radius:50%;background:#e8edf9"></div>
<svg class="i" style="left:2782px;top:1736px;" width="32" height="32" viewBox="0 0 24 24" fill="none" stroke="#4e6fd6" stroke-width="2" stroke-linecap="round" stroke-linejoin="round"><circle cx="12" cy="12" r="4"/><path d="M12 2v2"/><path d="M12 20v2"/><path d="m4.93 4.93 1.41 1.41"/><path d="m17.66 17.66 1.41 1.41"/><path d="M2 12h2"/><path d="M20 12h2"/><path d="m6.34 17.66-1.41 1.41"/><path d="m19.07 4.93-1.41 1.41"/></svg>
<svg class="i" style="left:2854px;top:1736px;" width="32" height="32" viewBox="0 0 24 24" fill="none" stroke="#0f172a" stroke-width="2" stroke-linecap="round" stroke-linejoin="round"><path d="M12 3a6 6 0 0 0 9 9 9 9 0 1 1-9-9Z"/></svg>
<svg class="i" style="left:2926px;top:1736px;" width="32" height="32" viewBox="0 0 24 24" fill="none" stroke="#0f172a" stroke-width="2" stroke-linecap="round" stroke-linejoin="round"><path d="M20 16V7a2 2 0 0 0-2-2H6a2 2 0 0 0-2 2v9m16 0H4m16 0 1.28 2.55a1 1 0 0 1-.9 1.45H3.62a1 1 0 0 1-.9-1.45L4 16"/></svg></body></html>
